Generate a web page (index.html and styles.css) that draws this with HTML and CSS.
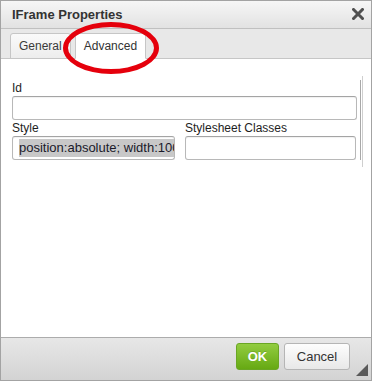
FILE: index.html
```html
<!DOCTYPE html>
<html>
<head>
<meta charset="utf-8">
<link rel="stylesheet" href="styles.css">
</head>
<body>
<div class="dialog">
  <div class="titlebar">
    <span class="title">IFrame Properties</span>
    <svg class="close" width="12" height="12" viewBox="0 0 12 12"><path d="M1.5 1.5 L10.5 10.5 M10.5 1.5 L1.5 10.5" stroke="#4f4f4f" stroke-width="3" stroke-linecap="square"/></svg>
  </div>
  <div class="tabbar">
    <div class="tab">General</div>
    <div class="tab active">Advanced</div>
  </div>
  <div class="content">
    <div class="frame-outer">
      <div class="frame-inner">
        <div class="field">
          <div class="label">Id</div>
          <div class="input wide"></div>
        </div>
        <div class="row">
          <div class="field">
            <div class="label">Style</div>
            <div class="input style"><span class="sel">position:absolute; width:100%; height:100%</span></div>
          </div>
          <div class="field">
            <div class="label">Stylesheet Classes</div>
            <div class="input classes"></div>
          </div>
        </div>
      </div>
    </div>
  </div>
  <div class="footer">
    <div class="btn ok">OK</div>
    <div class="btn cancel">Cancel</div>
    <span class="grip"></span>
  </div>
  <div class="mark"></div>
</div>
</body>
</html>
```
FILE: styles.css
```css
html, body { margin: 0; padding: 0; background: #fff; }
body { font-family: "Liberation Sans", Arial, sans-serif; }
.dialog {
  position: relative;
  width: 372px; height: 381px;
  box-sizing: border-box;
  border: 1px solid #a3a3a3;
  display: flex; flex-direction: column;
  background: #fff;
}
.titlebar {
  height: 27px;
  border-bottom: 1px solid #c0c0c0;
  background: linear-gradient(#f6f6f6, #e2e2e2);
  display: flex; align-items: center; justify-content: space-between;
  padding: 0 7px 0 11px;
}
.title { font-weight: bold; font-size: 13px; color: #333; }
.close { display: block; }
.tabbar {
  height: 30px;
  border-bottom: 1px solid #c6c6c6;
  background: #e8e8e8;
  display: flex; align-items: flex-end; gap: 4px;
  padding-left: 9px;
}
.tab {
  box-sizing: border-box;
  height: 26px;
  margin-bottom: -1px;
  padding: 0 8px;
  border: 1px solid #c6c6c6;
  border-radius: 3px 3px 0 0;
  background: linear-gradient(#fafafa, #ededed);
  font-size: 12px; color: #3a3a3a;
  display: flex; align-items: center;
}
.tab.active { background: #fff; border-bottom-color: #fff; color: #333; }
.content {
  height: 281px;
  box-sizing: border-box;
  padding: 17px 0 0 11px;
}
.frame-outer {
  width: 349px;
  padding: 4px 1px 7px 0;
  border-right: 1px solid #cfcfcf;
}
.frame-inner {
  border-right: 1px solid #a8a8a8;
}
.label { font-size: 12px; line-height: 16px; color: #1e1e1e; }
.input {
  box-sizing: border-box;
  height: 24px;
  border: 1px solid #b8b8b8;
  border-top-color: #a4a4a4;
  border-radius: 3px;
  box-shadow: inset 0 1px 1px rgba(0,0,0,0.06);
  background: #fff;
  overflow: hidden;
  white-space: nowrap;
  font-size: 13px; line-height: 18px;
  padding: 2px 0 0 6px;
}
.input.wide { width: 345px; }
.row { display: flex; gap: 10px; }
.input.style { width: 163px; }
.input.classes { width: 171px; }
.sel { background: #c8c8c8; color: #1a1a2a; display: inline-block; }
.footer {
  position: relative;
  height: 38px;
  border-top: 1px solid #acacac;
  background: linear-gradient(#e7e7e7, #d3d3d3);
  display: flex; justify-content: flex-end; align-items: flex-start;
  gap: 5px;
  padding: 5px 21px 0 0;
}
.btn {
  box-sizing: border-box;
  height: 27px;
  border-radius: 3px;
  font-size: 13px;
  display: flex; align-items: center; justify-content: center;
}
.ok {
  width: 43px;
  background: linear-gradient(#92cc40, #66a913);
  border: 1px solid #6aa624;
  color: #fff; font-weight: bold;
  text-shadow: 0 -1px 0 rgba(0,0,0,0.15);
}
.cancel {
  width: 66px;
  background: linear-gradient(#fdfdfd, #e8e8e8);
  border: 1px solid #b5b5b5;
  color: #333;
}
.grip {
  position: absolute; right: 3px; bottom: 4px;
  width: 0; height: 0;
  border-left: 12px solid transparent;
  border-bottom: 12px solid #5a5a5a;
}
.mark {
  position: absolute; left: 62px; top: 21px;
  width: 96px; height: 52px;
  box-sizing: border-box;
  border: 5px solid #e5000c;
  border-radius: 50%;
}
```
